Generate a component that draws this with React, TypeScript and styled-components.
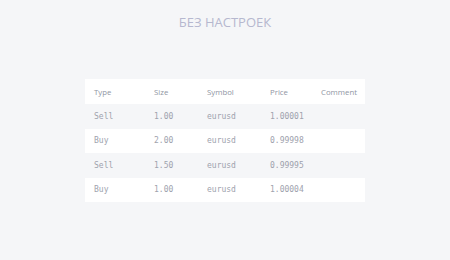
import React from 'react';
import styled, { createGlobalStyle } from 'styled-components';

const GlobalStyle = createGlobalStyle`
  html, body {
    margin: 0;
    padding: 0;
    background: #f5f6f8;
  }
`;

const Page = styled.div`
  width: 450px;
  height: 260px;
  display: flex;
  flex-direction: column;
  align-items: center;
  background: #f5f6f8;
`;

const Title = styled.h1`
  margin: 13px 0 0;
  font-family: "Open Sans", sans-serif;
  font-weight: 400;
  font-size: 13px;
  line-height: 18px;
  color: #b6b8cf;
`;

const Table = styled.div`
  margin-top: 48px;
  width: 280px;
  background: #ffffff;
  display: flex;
  flex-direction: column;
`;

const Row = styled.div<{ $striped?: boolean; $header?: boolean }>`
  display: grid;
  grid-template-columns: 60px 53px 63px 51px 1fr;
  align-items: center;
  height: ${p => (p.$header ? '25px' : '24.5px')};
  padding-left: 9px;
  background: ${p => (p.$striped ? '#f5f6f8' : '#ffffff')};
`;

const HeadCell = styled.div`
  font-family: "Open Sans", sans-serif;
  font-size: 7.8px;
  color: #8f95a3;
`;

const Cell = styled.div`
  font-family: "DejaVu Sans Mono", monospace;
  font-size: 8px;
  color: #9ea2ad;
`;

const rows = [
  ['Sell', '1.00', 'eurusd', '1.00001'],
  ['Buy', '2.00', 'eurusd', '0.99998'],
  ['Sell', '1.50', 'eurusd', '0.99995'],
  ['Buy', '1.00', 'eurusd', '1.00004'],
];

export default function App() {
  return (
    <Page>
      <GlobalStyle />
      <Title>БЕЗ НАСТРОЕК</Title>
      <Table>
        <Row $header>
          <HeadCell>Type</HeadCell>
          <HeadCell>Size</HeadCell>
          <HeadCell>Symbol</HeadCell>
          <HeadCell>Price</HeadCell>
          <HeadCell>Comment</HeadCell>
        </Row>
        {rows.map((r, i) => (
          <Row key={i} $striped={i % 2 === 0}>
            {r.map((c, j) => (
              <Cell key={j}>{c}</Cell>
            ))}
            <Cell />
          </Row>
        ))}
      </Table>
    </Page>
  );
}
